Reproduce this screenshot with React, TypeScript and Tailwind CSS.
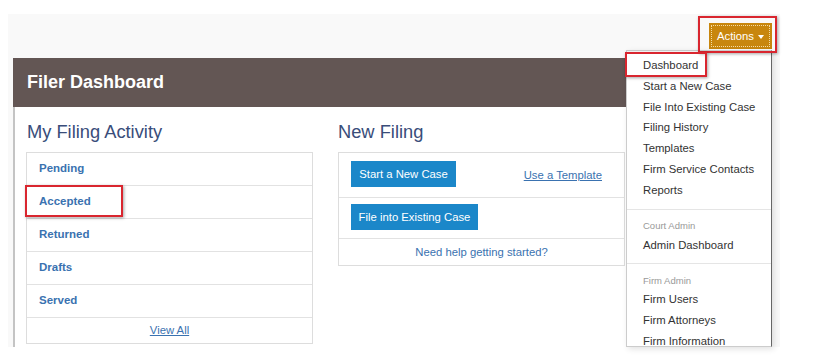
const ACTIVITY = ["Pending", "Accepted", "Returned", "Drafts", "Served"];

const MENU_MAIN = [
  "Dashboard",
  "Start a New Case",
  "File Into Existing Case",
  "Filing History",
  "Templates",
  "Firm Service Contacts",
  "Reports",
];

const MENU_FIRM = ["Firm Users", "Firm Attorneys", "Firm Information"];

function MenuItem({ label }: { label: string }) {
  return <div className="flex h-[20.8px] items-center pl-[16px] text-[11.3px] text-[#333]">{label}</div>;
}

function MenuHeader({ label }: { label: string }) {
  return <div className="flex h-[17px] items-center pl-[16px] text-[9.5px] text-[#999]">{label}</div>;
}

function Highlight({ className }: { className: string }) {
  return (
    <div
      className={`pointer-events-none absolute border-2 border-[#d9262f] shadow-[1px_1px_3px_rgba(0,0,0,0.35)] ${className}`}
    />
  );
}

export default function App() {
  return (
    <div className="relative h-[363px] w-[822px] overflow-hidden bg-white pl-[8px] pt-[14px] font-['Liberation_Sans',Arial,sans-serif]">
      <div className="relative h-[333px] w-[772px] bg-[#f9f9f9]">
        {/* Top bar */}
        <div className="flex h-[44px] items-start justify-end pr-[8px] pt-[9px]">
          <button className="flex h-[26px] w-[63px] items-center justify-center bg-[#c8860e] text-[11.3px] text-white outline-1 outline-dotted outline-[#f3dca6] outline-offset-[-3px]">
            Actions
            <span className="ml-[4px] mt-[1px] h-0 w-0 border-x-[3.5px] border-t-[4px] border-x-transparent border-t-white" />
          </button>
        </div>

        {/* Panel */}
        <div className="ml-[5px] w-[727px]">
          <div className="flex h-[49px] items-center bg-[#635654] pl-[14px] text-[18px] font-bold text-white">
            Filer Dashboard
          </div>
          <div className="h-[240px] border-l-2 border-[#c4c4c4] bg-white pl-[11px] pt-[15px]">
            <div className="grid grid-cols-[287px_287px] gap-x-[25px]">
              {/* My Filing Activity */}
              <div>
                <h2 className="mb-[10px] pl-[1px] text-[18.3px] leading-[20px] text-[#394d7a]">My Filing Activity</h2>
                <div className="border border-[#ddd] bg-white">
                  {ACTIVITY.map((item) => (
                    <div
                      key={item}
                      className="flex h-[33px] items-center border-b border-[#e2e2e2] pl-[12px] text-[11.5px] font-bold text-[#3a72b0]"
                    >
                      {item}
                    </div>
                  ))}
                  <div className="flex h-[25px] items-center justify-center text-[11.3px] text-[#3a72b0] underline">
                    View All
                  </div>
                </div>
              </div>

              {/* New Filing */}
              <div>
                <h2 className="mb-[10px] text-[18.3px] leading-[20px] text-[#394d7a]">New Filing</h2>
                <div className="border border-[#ddd] bg-white">
                  <div className="flex h-[45px] items-start justify-between border-b border-[#e2e2e2] pl-[12px] pr-[22px] pt-[8px]">
                    <button className="h-[26px] w-[105px] bg-[#1b87c9] text-[11.3px] text-white">Start a New Case</button>
                    <span className="mt-[6px] text-[11.3px] text-[#3a72b0] underline">Use a Template</span>
                  </div>
                  <div className="h-[41px] border-b border-[#e2e2e2] pl-[12px] pt-[6px]">
                    <button className="h-[26px] w-[127px] bg-[#1b87c9] text-[11.3px] text-white">
                      File into Existing Case
                    </button>
                  </div>
                  <div className="flex h-[26px] items-center justify-center text-[11.3px] text-[#3a72b0]">
                    Need help getting started?
                  </div>
                </div>
              </div>
            </div>
          </div>
        </div>

        {/* Actions dropdown */}
        <div className="absolute bottom-0 left-[618px] top-[36px] w-[146px] border border-[#ccc] border-r-[#666] bg-white pt-[4px] shadow-[2px_2px_6px_rgba(0,0,0,0.12)]">
          {MENU_MAIN.map((m) => (
            <MenuItem key={m} label={m} />
          ))}
          <div className="my-[8px] h-px bg-[#e5e5e5]" />
          <MenuHeader label="Court Admin" />
          <MenuItem label="Admin Dashboard" />
          <div className="my-[8px] h-px bg-[#e5e5e5]" />
          <MenuHeader label="Firm Admin" />
          {MENU_FIRM.map((m) => (
            <MenuItem key={m} label={m} />
          ))}
        </div>
      </div>

      {/* Red annotation boxes */}
      <Highlight className="left-[698px] top-[16px] h-[37px] w-[79px]" />
      <Highlight className="left-[625px] top-[52px] h-[25px] w-[82px]" />
      <Highlight className="left-[25px] top-[185px] h-[32px] w-[98px]" />
    </div>
  );
}
